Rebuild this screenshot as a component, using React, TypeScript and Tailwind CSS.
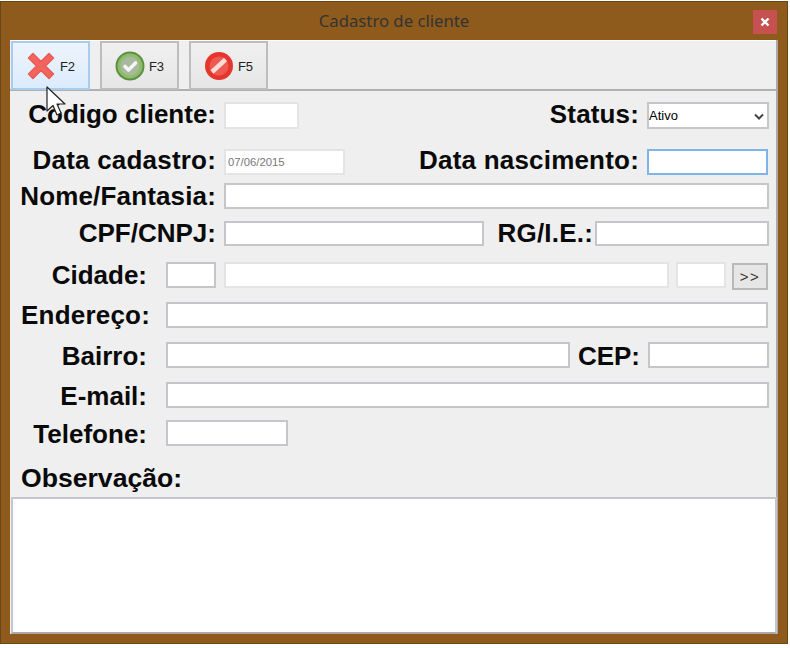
import { ReactNode } from "react";

const fieldBase = "block h-full bg-white border-2 outline-none text-[12px] px-0.5 [font-family:'Liberation_Sans',Arial,sans-serif]";
const normal = "border-[#c6c6ca]";
const disabled = "border-[#e4e4e4]";

const Label = ({ children, className }: { children: ReactNode; className: string }) => (
  <span className={`shrink-0 text-right whitespace-nowrap text-[26px] leading-none font-bold text-[#0a0a0a] ${className}`}>
    {children}
  </span>
);

const XIcon = () => (
  <svg width="30" height="30" viewBox="0 0 30 30">
    <path d="M7 2.5 L15 10.5 L23 2.5 L27.5 7 L19.5 15 L27.5 23 L23 27.5 L15 19.5 L7 27.5 L2.5 23 L10.5 15 L2.5 7 Z" fill="#f4645f" stroke="#e85a55" strokeWidth="1.5" strokeLinejoin="round" />
  </svg>
);

const CheckIcon = () => (
  <svg width="30" height="30" viewBox="0 0 30 30">
    <circle cx="15" cy="15" r="14.5" fill="#5f8f42" />
    <circle cx="15" cy="15" r="12.5" fill="#8dbd68" />
    <circle cx="15" cy="15" r="9.5" fill="#a9b8a0" />
    <path d="M10 15.5 L13.5 19 L20.5 12" fill="none" stroke="#f4f7ee" strokeWidth="3.6" strokeLinecap="round" strokeLinejoin="round" />
  </svg>
);

const NoIcon = () => (
  <svg width="30" height="30" viewBox="0 0 30 30">
    <circle cx="15" cy="15" r="14" fill="#e5362e" />
    <circle cx="15" cy="15" r="9.5" fill="#ee5a50" />
    <path d="M8 21 L21.5 8.5" stroke="#f8dcd8" strokeWidth="4.5" />
  </svg>
);

const ToolButton = ({ icon, label, active }: { icon: ReactNode; label: string; active?: boolean }) => (
  <button
    className={`w-[79px] h-[49px] flex items-center justify-center gap-1 border-2 ${
      active ? "border-[#a6ccf0] bg-gradient-to-b from-[#ecf4fc] to-[#dcecfc]" : "border-[#bdbdbd] bg-gradient-to-b from-[#f0f0f0] to-[#e6e6e6]"
    }`}
  >
    {icon}
    <span className="text-[13px] text-[#222] pt-[3px]">{label}</span>
  </button>
);

export default function App() {
  return (
    <div className="w-[790px] h-[648px] bg-white [font-family:'Liberation_Sans',Arial,sans-serif] overflow-hidden">
      <div className="relative mt-px w-[788px] h-[643px] bg-[#8f5b1c] border border-[#6b4514] flex flex-col">
        {/* Title bar */}
        <div className="h-[38px] shrink-0 flex items-center justify-center relative">
          <span className="text-[16.7px] text-[#333] [font-family:'Noto_Sans',sans-serif] leading-none">Cadastro de cliente</span>
          <div className="absolute right-[10px] top-2 w-6 h-6 bg-[#c75050] flex items-center justify-center">
            <svg width="10" height="10" viewBox="0 0 10 10">
              <path d="M1.5 1.5 L8.5 8.5 M8.5 1.5 L1.5 8.5" stroke="#fff" strokeWidth="2.4" />
            </svg>
          </div>
        </div>

        {/* Client area */}
        <div className="mx-[9px] w-[768px] h-[594px] bg-[#efefef] border-r-2 border-[#a9a9a9] flex flex-col">
          <div className="h-[51px] shrink-0 border-t border-white border-b-2 border-b-[#b0b0b0] flex gap-[10px] pl-px">
            <ToolButton icon={<XIcon />} label="F2" active />
            <ToolButton icon={<CheckIcon />} label="F3" />
            <ToolButton icon={<NoIcon />} label="F5" />
          </div>

          <div className="flex items-center h-[27px] mt-[11px]">
            <Label className="w-[206px] mb-1">Código cliente:</Label>
            <input readOnly className={`${fieldBase} ${disabled} w-[75px] ml-2`} />
            <Label className="w-[340px] mb-1 tracking-[0.15px]">Status:</Label>
            <div className="relative h-full w-[122px] ml-2">
              <select className={`${fieldBase} ${normal} appearance-none w-full !text-[13px] !px-0`}>
                <option>Ativo</option>
              </select>
              <svg className="absolute right-[5px] top-[11px]" width="10" height="7" viewBox="0 0 10 7">
                <path d="M1 1.5 L5 5.5 L9 1.5" fill="none" stroke="#444" strokeWidth="2" />
              </svg>
            </div>
          </div>

          <div className="flex items-center h-[26px] mt-5">
            <Label className="w-[206px] mb-1 tracking-[0.2px]">Data cadastro:</Label>
            <input readOnly value="07/06/2015" className={`${fieldBase} ${disabled} w-[121px] ml-2 text-[#777] !text-[11.3px]`} />
            <Label className="w-[294px] mb-1 tracking-[0.2px]">Data nascimento:</Label>
            <input readOnly className={`${fieldBase} border-[#7eb4ea] w-[121px] ml-2`} />
          </div>

          <div className="flex items-center h-[26px] mt-2">
            <Label className="w-[206px] tracking-[0.15px]">Nome/Fantasia:</Label>
            <input readOnly className={`${fieldBase} ${normal} w-[545px] ml-2`} />
          </div>

          <div className="flex items-center h-[25px] mt-3">
            <Label className="w-[206px] mb-0.5">CPF/CNPJ:</Label>
            <input readOnly className={`${fieldBase} ${normal} w-[260px] ml-2`} />
            <Label className="w-[109px] mb-0.5 tracking-[0.2px]">RG/I.E.:</Label>
            <input readOnly className={`${fieldBase} ${normal} w-[174px] ml-[2px]`} />
          </div>

          <div className="flex items-center h-[26px] mt-4">
            <Label className="w-[137px]">Cidade:</Label>
            <input readOnly className={`${fieldBase} ${normal} w-[50px] ml-[19px]`} />
            <input readOnly className={`${fieldBase} ${disabled} w-[445px] ml-2`} />
            <input readOnly className={`${fieldBase} ${disabled} w-[50px] ml-[7px]`} />
            <button className="w-9 h-[27px] ml-[6px] mt-[2px] border-2 border-[#b9b9b9] bg-[#e6e6e6] text-[15px] text-[#333] leading-none tracking-[1.5px]">&gt;&gt;</button>
          </div>

          <div className="flex items-center h-[26px] mt-[14px]">
            <Label className="w-[140px] tracking-[0.2px]">Endereço:</Label>
            <input readOnly className={`${fieldBase} ${normal} w-[602px] ml-4`} />
          </div>

          <div className="flex items-center h-[26px] mt-[14px]">
            <Label className="w-[137px] mt-0.5">Bairro:</Label>
            <input readOnly className={`${fieldBase} ${normal} w-[404px] ml-[19px]`} />
            <Label className="w-[70px] mt-0.5">CEP:</Label>
            <input readOnly className={`${fieldBase} ${normal} w-[121px] ml-2`} />
          </div>

          <div className="flex items-center h-[26px] mt-[14px]">
            <Label className="w-[137px] mt-0.5">E-mail:</Label>
            <input readOnly className={`${fieldBase} ${normal} w-[603px] ml-[19px]`} />
          </div>

          <div className="flex items-center h-[26px] mt-3">
            <Label className="w-[137px] mt-0.5">Telefone:</Label>
            <input readOnly className={`${fieldBase} ${normal} w-[122px] ml-[19px]`} />
          </div>

          <div className="h-[24px] mt-5 pl-[11px] flex items-center">
            <span className="text-[26.6px] leading-none font-bold text-[#0a0a0a] whitespace-nowrap">Observação:</span>
          </div>

          <textarea readOnly className="block mt-[7px] ml-px w-[766px] flex-1 bg-white border-2 border-[#c6c6ca] border-b-[#a9a9a9] resize-none outline-none" />
        </div>

        {/* Mouse pointer */}
        <svg className="absolute left-[45px] top-[84px]" width="22" height="34" viewBox="0 0 22 34">
          <path d="M1 1 L1 25 L7 19.5 L11 29 L15 27 L11 18 L19 18 Z" fill="#fff" stroke="#222" strokeWidth="1.2" strokeLinejoin="round" />
        </svg>
      </div>
    </div>
  );
}
